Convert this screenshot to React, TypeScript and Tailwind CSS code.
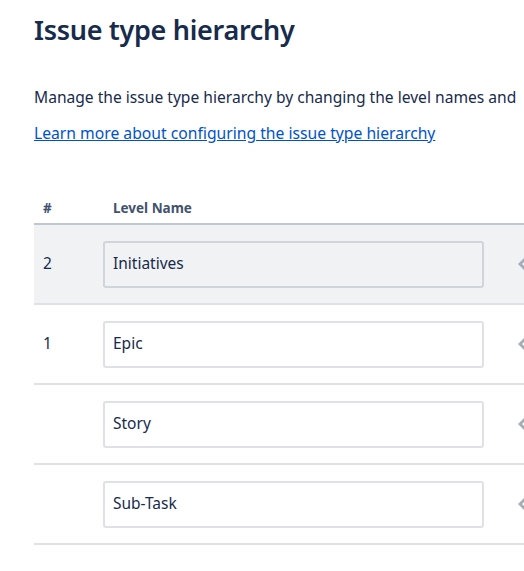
import React from 'react';

const rows = [
  { level: '2', name: 'Initiatives', active: true },
  { level: '1', name: 'Epic', active: false },
  { level: '', name: 'Story', active: false },
  { level: '', name: 'Sub-Task', active: false },
];

const HandleIcon: React.FC = () => (
  <svg width="14" height="14" viewBox="0 0 14 14" className="shrink-0 text-[#a5adba]">
    <path d="M7 1 L1 7 L7 13 L9 11 L5 7 L9 3 Z" fill="currentColor" />
  </svg>
);

const App: React.FC = () => {
  return (
    <div className="min-h-screen bg-white overflow-hidden text-[#172b4d]" style={{ fontFamily: '"Noto Sans", "Segoe UI", sans-serif' }}>
      <div className="pl-[34px]">
        <h1 className="pt-[12px] text-[27px] leading-[36px] font-semibold tracking-[-0.3px]">Issue type hierarchy</h1>
        <p className="mt-[37px] text-[15.6px] leading-[24px] whitespace-nowrap">
          Manage the issue type hierarchy by changing the level names and
        </p>
        <a href="#" className="mt-[12px] block w-max text-[15.7px] leading-[24px] text-[#0052cc] underline whitespace-nowrap">
          Learn more about configuring the issue type hierarchy
        </a>

        <div className="mt-[48px] w-[600px]">
          <div className="flex h-[32px] items-center border-b-2 border-[#c1c7d0] text-[13.5px] font-bold text-[#42526e]">
            <div className="w-[69px] pl-[9px]">#</div>
            <div className="pl-[10px]">Level Name</div>
          </div>
          {rows.map((r) => (
            <div
              key={r.name}
              className={`flex h-[80px] items-center border-b-2 border-[#dfe1e6] ${r.active ? 'bg-[#f1f2f4]' : 'bg-white'}`}
            >
              <div className="w-[69px] pl-[9px] text-[15.5px]">{r.level}</div>
              <div
                className={`flex h-[47px] w-[381px] items-center rounded-[3px] border-2 px-[8px] text-[15.5px] ${
                  r.active ? 'border-[#d1d5db] bg-[#f1f2f4]' : 'border-[#dfe1e6] bg-white'
                }`}
              >
                {r.name}
              </div>
              <div className="ml-[33px] flex items-center">
                <HandleIcon />
              </div>
            </div>
          ))}
        </div>
      </div>
    </div>
  );
};

export default App;
